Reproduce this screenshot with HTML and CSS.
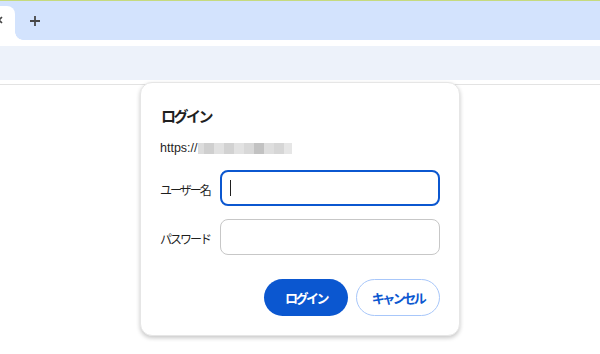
FILE: index.html
```html
<!DOCTYPE html>
<html lang="ja">
<head>
<meta charset="utf-8">
<title>ログイン</title>
<link rel="stylesheet" href="styles.css">
</head>
<body>
<div class="topline"></div>
<div class="tabstrip">
  <div class="tab">
    <svg class="tab-close" width="8" height="8" viewBox="0 0 8 8"><path d="M1 1L7 7M7 1L1 7" stroke="#474747" stroke-width="1.6" fill="none"/></svg>
  </div>
  <div class="newtab">
    <svg width="12" height="12" viewBox="0 0 12 12"><path d="M6 1V11M1 6H11" stroke="#474747" stroke-width="1.8" fill="none"/></svg>
  </div>
</div>
<div class="gap"></div>
<div class="toolbar"></div>
<div class="content"></div>

<div class="dialog">
  <div class="title">ログイン</div>
  <div class="url"><span class="proto">https://</span><span class="blur"><i class="b1"></i><i class="b2"></i><i class="b3"></i><i class="b4"></i><i class="b5"></i><i class="b6"></i><i class="b7"></i><i class="b8"></i><i class="b9"></i><i class="b10"></i></span></div>
  <div class="form">
    <div class="label">ユーザー名</div>
    <div class="input focused"><span class="caret"></span></div>
    <div class="label">パスワード</div>
    <div class="input"></div>
  </div>
  <div class="actions">
    <div class="btn primary">ログイン</div>
    <div class="btn secondary">キャンセル</div>
  </div>
</div>
</body>
</html>
```

FILE: styles.css
```css
html, body {
  margin: 0;
  padding: 0;
  width: 600px;
  height: 354px;
  overflow: hidden;
  background: #ffffff;
  font-family: "Noto Sans CJK JP", "Noto Sans", sans-serif;
  color: #1f1f1f;
}

.topline {
  height: 1px;
  background: #c6da7e;
}

.tabstrip {
  height: 39px;
  background: #d3e3fd;
  display: flex;
  align-items: stretch;
}

.tab {
  position: relative;
  width: 15px;
  margin-top: 5px;
  background: #ffffff;
  border-top-right-radius: 8px;
}

.tab::after {
  content: "";
  position: absolute;
  left: 15px;
  bottom: 0;
  width: 8px;
  height: 8px;
  background: radial-gradient(circle at 8px 0, #d3e3fd 7.5px, #ffffff 8px);
}

.tab-close {
  position: absolute;
  left: -5px;
  top: 10px;
}

.newtab {
  display: flex;
  align-items: center;
  justify-content: center;
  width: 12px;
  margin-left: 14px;
}

.newtab svg {
  display: block;
}

.gap {
  height: 6px;
}

.toolbar {
  height: 34px;
  background: #edf2fa;
}

.content {
  margin-top: 4px;
  border-top: 1px solid #e3e3e3;
}

.dialog {
  position: absolute;
  left: 140px;
  top: 82px;
  width: 320px;
  height: 254px;
  box-sizing: border-box;
  padding: 19px;
  background: #ffffff;
  border: 1px solid #e6e6e6;
  border-radius: 12px;
  box-shadow: 0 2px 4px rgba(0, 0, 0, 0.22);
  display: flex;
  flex-direction: column;
}

.title {
  height: 28px;
  line-height: 28px;
  font-size: 15px;
  font-weight: 700;
  letter-spacing: -2.5px;
  padding-left: 1px;
}

.url {
  margin-top: 9px;
  height: 18px;
  display: flex;
  align-items: center;
  font-size: 12px;
}

.proto {
  font-family: "Liberation Sans", Arial, sans-serif;
  font-size: 12.5px;
  color: #1f1f1f;
}

.blur {
  display: flex;
  height: 11px;
}

.blur i {
  display: block;
  width: 10px;
  height: 11px;
}
.b1 { background: #dcdcdc; width: 6px !important; }
.b2 { background: #cfcfcf; }
.b3 { background: #e1e1e1; }
.b4 { background: #d2d2d2; }
.b5 { background: #e2e2e2; }
.b6 { background: #d8d8d8; }
.b7 { background: #c2c2c2; }
.b8 { background: #dedede; }
.b9 { background: #d6d6d6; }
.b10 { background: #e6e6e6; width: 8px !important; }

.form {
  margin-top: 13px;
  display: grid;
  grid-template-columns: 60px 1fr;
  row-gap: 13px;
  align-items: center;
}

.label {
  font-size: 12px;
  letter-spacing: -2px;
  color: #1f1f1f;
  margin-top: 3px;
}

.input {
  height: 36px;
  box-sizing: border-box;
  border: 1px solid #c7c7c7;
  border-radius: 8px;
  display: flex;
  align-items: center;
  padding-left: 9px;
}

.input.focused {
  border: 2px solid #0b57d0;
  padding-left: 8px;
}

.caret {
  display: block;
  width: 1px;
  height: 16px;
  background: #1f1f1f;
}

.actions {
  margin-top: 24px;
  display: flex;
  justify-content: flex-end;
  gap: 8px;
}

.btn {
  width: 84px;
  height: 37px;
  box-sizing: border-box;
  border-radius: 19px;
  display: flex;
  align-items: center;
  justify-content: center;
  font-size: 13px;
  font-weight: 700;
  letter-spacing: -2.5px;
}

.btn.primary {
  background: #0b57d0;
  color: #ffffff;
}

.btn.secondary {
  background: #ffffff;
  border: 1px solid #a8c7fa;
  color: #0b57d0;
}
```
